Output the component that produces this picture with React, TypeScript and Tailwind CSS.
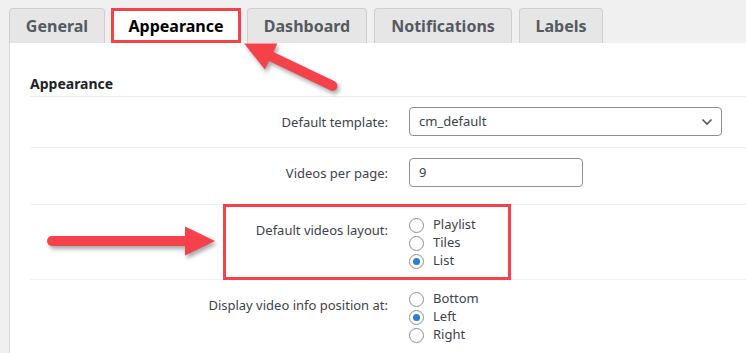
import React from 'react';

const font = { fontFamily: '"Noto Sans", "Open Sans", Arial, sans-serif' };

const tabs = [
  { label: 'General', w: 'w-[96px]' },
  { label: 'Appearance', w: 'w-[128px]', active: true },
  { label: 'Dashboard', w: 'w-[120px]' },
  { label: 'Notifications', w: 'w-[138px]' },
  { label: 'Labels', w: 'w-[84px]' },
];

const Radio = ({ label, checked }: { label: string; checked?: boolean }) => (
  <div className="flex items-center h-[18px]">
    <span className="w-[15px] h-[15px] rounded-full border border-[#8c8f94] bg-white flex items-center justify-center">
      {checked && <span className="w-[7px] h-[7px] rounded-full bg-[#2c7fcc]" />}
    </span>
    <span className="ml-[9px]">{label}</span>
  </div>
);

// arrow drawn along +x, length L, then placed by transform
const Arrow = ({ x, y, angle, len }: { x: number; y: number; angle: number; len: number }) => (
  <g transform={`translate(${x} ${y}) rotate(${angle})`}>
    <line x1={5} y1={0} x2={len - 26} y2={0} stroke="#f5414a" strokeWidth={10} strokeLinecap="round" />
    <polygon points={`${len - 30},-14.5 ${len},0 ${len - 30},14.5`} fill="#f5414a" />
  </g>
);

const App = () => {
  return (
    <div className="relative w-[746px] h-[353px] overflow-hidden bg-[#f0f0f1] text-[13px] text-[#3c434a]" style={font}>
      {/* tabs */}
      <div className="flex items-end gap-[7px] pl-[9px] pt-[8px] h-[43px]">
        {tabs.map((t) => (
          <div
            key={t.label}
            className={`${t.w} h-[35px] flex items-center justify-center rounded-t-[4px] text-[16px] font-bold ${
              t.active ? 'bg-white text-black' : 'bg-[#e6e6e6] border border-b-0 border-[#cfcfcf] text-[#555a60]'
            }`}
          >
            {t.label}
          </div>
        ))}
      </div>

      {/* panel */}
      <div className="ml-[9px] bg-white border-l border-[#dcdcde] h-[310px] pl-[20px]">
        <div className="pt-[31px] pb-[2px] text-[14px] leading-[20px] font-bold text-[#1d2327] border-b border-[#ececec]">Appearance</div>

        <div className="flex h-[51px] border-b border-[#f0f0f1]">
          <div className="w-[358px] text-right pt-[16px]">Default template:</div>
          <div className="pl-[21px] pt-[10px]">
            <div className="w-[313px] h-[29px] border border-[#8c8f94] rounded-[4px] flex items-center justify-between pl-[9px] pr-[8px]">
              <span>cm_default</span>
              <svg width="12" height="8" viewBox="0 0 12 8" fill="none" stroke="#50575e" strokeWidth="1.6">
                <path d="M1.5 1.5 L6 6 L10.5 1.5" />
              </svg>
            </div>
          </div>
        </div>

        <div className="flex h-[57px] border-b border-[#f0f0f1]">
          <div className="w-[358px] text-right pt-[16px]">Videos per page:</div>
          <div className="pl-[21px] pt-[10px]">
            <div className="w-[174px] h-[29px] border border-[#8c8f94] rounded-[4px] flex items-center pl-[9px]">9</div>
          </div>
        </div>

        <div className="flex h-[75px] border-b border-[#f0f0f1]">
          <div className="w-[358px] text-right pt-[16px]">Default videos layout:</div>
          <div className="pl-[21px] pt-[11px]">
            <Radio label="Playlist" />
            <Radio label="Tiles" />
            <Radio label="List" checked />
          </div>
        </div>

        <div className="flex">
          <div className="w-[358px] text-right pt-[16px]">Display video info position at:</div>
          <div className="pl-[21px] pt-[10px]">
            <Radio label="Bottom" />
            <Radio label="Left" checked />
            <Radio label="Right" />
          </div>
        </div>
      </div>

      {/* annotations */}
      <div className="absolute left-[111px] top-[8px] w-[130px] h-[35px] border-[3px] border-[#f5414a]" />
      <div className="absolute left-[223px] top-[204px] w-[288px] h-[76px] border-[3px] border-[#f5414a]" />
      <svg className="absolute left-0 top-0" width="746" height="353" style={{ filter: 'drop-shadow(2px 3px 2px rgba(0,0,0,0.35))' }}>
        <Arrow x={337} y={88} angle={205.6} len={103} />
        <Arrow x={47} y={241} angle={0} len={168} />
      </svg>
    </div>
  );
};

export default App;
